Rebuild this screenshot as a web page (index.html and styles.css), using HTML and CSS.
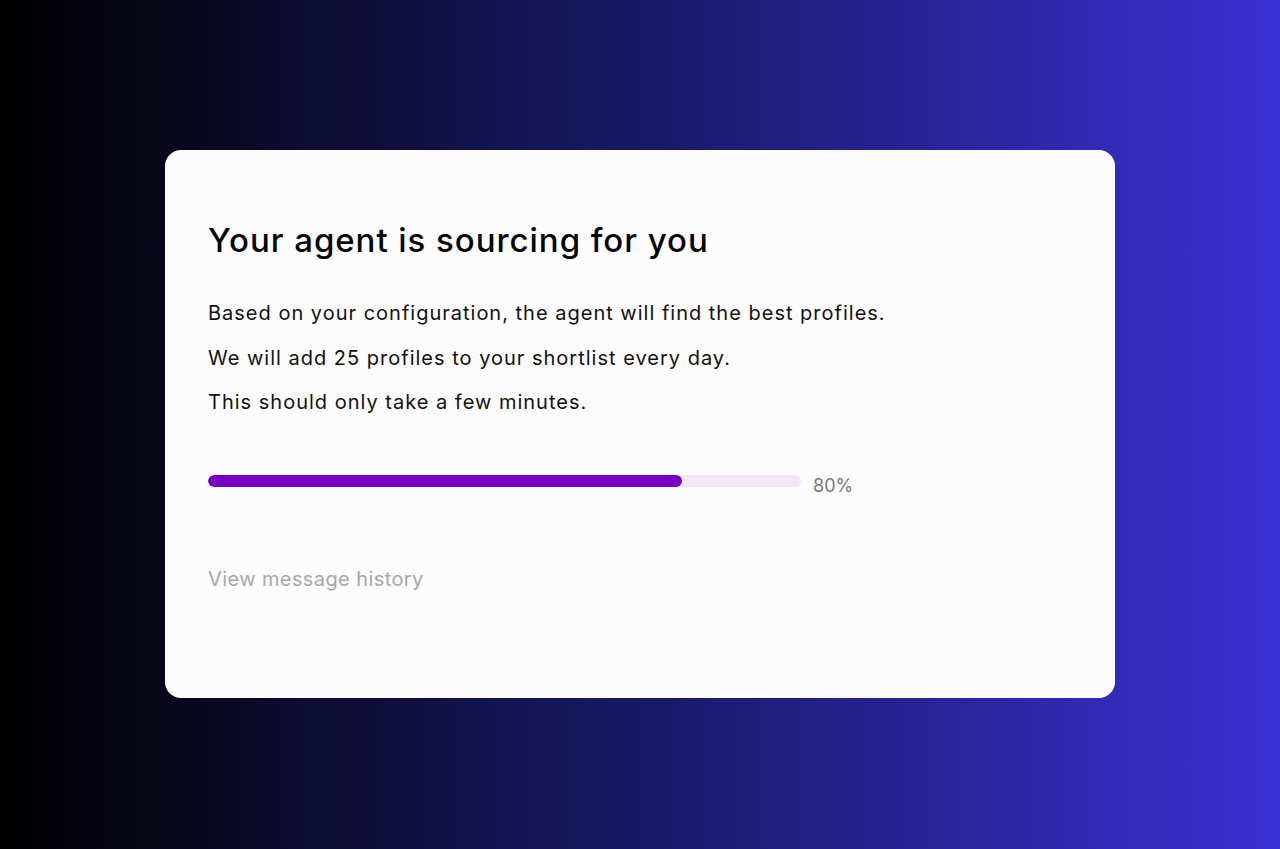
FILE: index.html
```html
<!DOCTYPE html>
<html lang="en">
<head>
<meta charset="utf-8">
<title>Your agent is sourcing for you</title>
<link rel="stylesheet" href="styles.css">
</head>
<body>
<main class="stage">
  <section class="card">
    <h1 class="title">Your agent is sourcing for you</h1>
    <div class="copy">
      <p>Based on your configuration, the agent will find the best profiles.</p>
      <p>We will add 25 profiles to your shortlist every day.</p>
      <p>This should only take a few minutes.</p>
    </div>
    <div class="progress-row">
      <div class="track"><div class="fill" style="width:80%"></div></div>
      <span class="pct">80%</span>
    </div>
    <a class="history" href="#">View message history</a>
  </section>
</main>
</body>
</html>
```

FILE: styles.css
```css
* { box-sizing: border-box; }
html, body { margin: 0; padding: 0; }
body {
  font-family: Inter, "Noto Sans", sans-serif;
  background: linear-gradient(90deg, #000000 0%, #1a1866 50%, #3a31d4 100%);
  min-height: 849px;
}
.stage {
  height: 849px;
  display: flex;
  align-items: center;
  justify-content: center;
  padding-bottom: 1px;
}
.card {
  width: 950px;
  height: 548px;
  background: #fcfcfc;
  border-radius: 16px;
  padding: 66px 43px 0 43px;
  display: flex;
  flex-direction: column;
  align-items: flex-start;
}
.title {
  margin: 0;
  font-size: 33px;
  font-weight: 500;
  color: #050505;
  line-height: 48px;
  letter-spacing: 0.95px;
}
.copy { margin-top: 30px; }
.copy p {
  margin: 0 0 5px 0;
  font-size: 20px;
  line-height: 39.5px;
  color: #111111;
  letter-spacing: 1px;
}
.progress-row {
  margin-top: 43px;
  display: flex;
  align-items: flex-start;
  gap: 12px;
}
.track {
  width: 593px;
  height: 12px;
  border-radius: 6px;
  background: #f3e6f8;
  overflow: hidden;
  margin-top: 4px;
}
.fill {
  height: 100%;
  border-radius: 6px;
  background: #7800bf;
}
.pct {
  font-size: 18px;
  color: #7a7a7a;
  line-height: 28px;
  margin-top: 1px;
}
.history {
  margin-top: 65px;
  font-size: 20px;
  color: #a8a8a8;
  text-decoration: none;
  line-height: 28px;
  letter-spacing: 0.4px;
}
```
